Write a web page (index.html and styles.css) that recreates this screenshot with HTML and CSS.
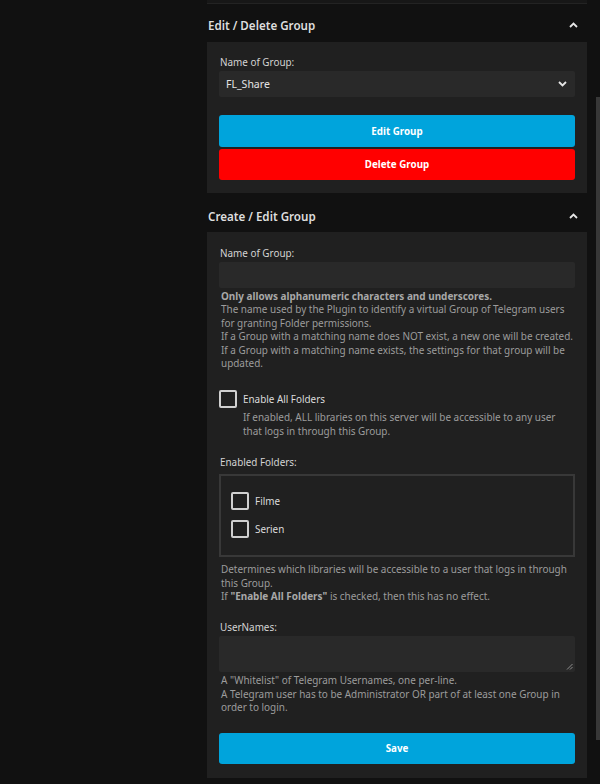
FILE: index.html
```html
<!DOCTYPE html>
<html lang="en">
<head>
<meta charset="utf-8">
<title>Telegram Groups</title>
<link rel="stylesheet" href="styles.css">
</head>
<body>
<div class="app">
  <main class="main">
    <div class="prev-card"></div>

    <div class="section-head head-first">
      <h2 class="section-title">Edit / Delete Group</h2>
      <svg class="chev" width="9" height="6" viewBox="0 0 9 6"><path d="M1 5 L4.5 1.5 L8 5" fill="none" stroke="#e6e6e6" stroke-width="1.8"/></svg>
    </div>
    <div class="card card-edit">
      <label class="label">Name of Group:</label>
      <div class="select">
        <span>FL_Share</span>
        <svg class="chev" width="9" height="6" viewBox="0 0 9 6"><path d="M1 1 L4.5 4.5 L8 1" fill="none" stroke="#e6e6e6" stroke-width="1.8"/></svg>
      </div>
      <div class="btns">
        <button class="btn btn-blue">Edit Group</button>
        <button class="btn btn-red">Delete Group</button>
      </div>
    </div>

    <div class="section-head head-second">
      <h2 class="section-title">Create / Edit Group</h2>
      <svg class="chev" width="9" height="6" viewBox="0 0 9 6"><path d="M1 5 L4.5 1.5 L8 5" fill="none" stroke="#e6e6e6" stroke-width="1.8"/></svg>
    </div>
    <div class="card card-create">
      <label class="label">Name of Group:</label>
      <div class="input"></div>
      <div class="help help-name">
        <strong>Only allows alphanumeric characters and underscores.</strong><br>
        The name used by the Plugin to identify a virtual Group of Telegram users for granting Folder permissions.<br>
        If a Group with a matching name does NOT exist, a new one will be created.<br>
        If a Group with a matching name exists, the settings for that group will be updated.
      </div>

      <div class="check-row check-all">
        <span class="box"></span>
        <div class="check-text">
          <div class="check-label">Enable All Folders</div>
          <div class="help">If enabled, ALL libraries on this server will be accessible to any user that logs in through this Group.</div>
        </div>
      </div>

      <label class="label label-folders">Enabled Folders:</label>
      <div class="folders">
        <div class="folder"><span class="box"></span><span class="check-label">Filme</span></div>
        <div class="folder"><span class="box"></span><span class="check-label">Serien</span></div>
      </div>
      <div class="help help-folders">
        Determines which libraries will be accessible to a user that logs in through this Group.<br>
        If <strong>"Enable All Folders"</strong> is checked, then this has no effect.
      </div>

      <label class="label label-users">UserNames:</label>
      <div class="textarea">
        <svg class="grip" width="7" height="7" viewBox="0 0 7 7"><path d="M6.5 1 L1 6.5 M6.5 4 L4 6.5" stroke="#9a9a9a" stroke-width="0.9"/></svg>
      </div>
      <div class="help help-users">
        A "Whitelist" of Telegram Usernames, one per-line.<br>
        A Telegram user has to be Administrator OR part of at least one Group in order to login.
      </div>

      <button class="btn btn-blue btn-save">Save</button>
    </div>
  </main>
  <div class="scrollbar"><div class="thumb"></div></div>
</div>
</body>
</html>
```

FILE: styles.css
```css
* { box-sizing: border-box; }
html, body { margin: 0; padding: 0; }
body {
  background: #111111;
  font-family: "Noto Sans", "Open Sans", sans-serif;
  color: #dcdcdc;
  width: 600px;
  height: 784px;
  overflow: hidden;
}
.app {
  display: flex;
  height: 784px;
}
.main {
  flex: 1;
  padding-left: 207px;
  padding-right: 9px;
}
.scrollbar {
  width: 4px;
  padding-top: 97px;
}
.thumb {
  height: 643px;
  background: #383838;
}
.prev-card {
  height: 4px;
  background: #171717;
  border-bottom: 1px solid #232323;
}
.section-head {
  display: flex;
  align-items: center;
  justify-content: space-between;
  padding: 0 9px 0 1px;
}
.head-first { height: 38px; padding-top: 4px; }
.head-second { height: 39px; padding-top: 7px; }
.section-title {
  margin: 0;
  font-size: 11.6px;
  font-weight: 600;
  color: #dedede;
}
.card {
  background: #202020;
  padding: 13px 12px 13px 12px;
  display: flex;
  flex-direction: column;
}
.card-create { padding-top: 14px; padding-bottom: 14px; }
.label {
  font-size: 9.9px;
  line-height: 14px;
  color: #d4d4d4;
  margin-left: 1px;
}
.select {
  margin-top: 2px;
  height: 26px;
  background: #292929;
  border-radius: 2px;
  display: flex;
  align-items: center;
  justify-content: space-between;
  padding: 0 8px 0 7px;
  font-size: 10.5px;
  color: #e4e4e4;
}
.btns {
  margin-top: 18px;
  display: flex;
  flex-direction: column;
  gap: 2px;
}
.btn {
  border: 0;
  height: 32px;
  border-radius: 3px;
  font-family: "Noto Sans", "Open Sans", sans-serif;
  font-size: 9.8px;
  font-weight: 700;
  color: #ffffff;
  display: block;
  width: 100%;
}
.btn-red { height: 31px; background: #ff0000; }
.btn-blue { background: #00a4dc; }
.input {
  margin-top: 2px;
  height: 26px;
  background: #292929;
  border-radius: 2px;
}
.help {
  font-size: 9.95px;
  line-height: 13.4px;
  color: #9c9c9c;
  margin-left: 2px;
}
.help strong { color: #a8a8a8; font-weight: 700; }
.help-name { margin-top: 2px; }
.check-row {
  display: flex;
  gap: 6px;
  margin-top: 20px;
}
.box {
  flex: none;
  width: 18px;
  height: 18px;
  border: 2px solid #d0d0d0;
  border-radius: 2px;
}
.check-text .help { margin-left: 0; }
.check-label {
  font-size: 9.9px;
  line-height: 18px;
  color: #dcdcdc;
  margin-bottom: 3px;
}
.label-folders { margin-top: 17px; }
.folders {
  margin-top: 5px;
  height: 83px;
  border: 2px solid #383838;
  padding: 16px 10px;
  display: flex;
  flex-direction: column;
  gap: 10px;
}
.folder {
  display: flex;
  align-items: center;
  gap: 6px;
}
.folder .check-label { margin: 0; }
.help-folders { margin-top: 6px; }
.label-users { margin-top: 17px; }
.textarea {
  margin-top: 2px;
  height: 36px;
  background: #292929;
  border-radius: 2px;
  position: relative;
}
.grip { position: absolute; right: 2px; bottom: 2px; }
.help-users { margin-top: 2px; }
.btn-save { margin-top: 18px; height: 31px; }
```
